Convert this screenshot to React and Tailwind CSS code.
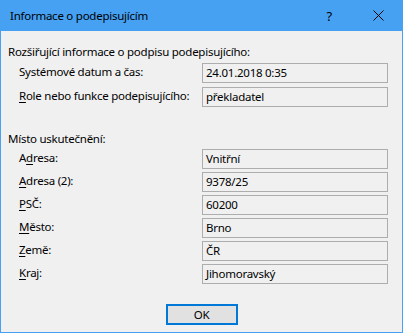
const font = { fontFamily: '"Noto Sans", "Liberation Sans", sans-serif' };

function Key({ children }) {
  return <span className="underline underline-offset-2">{children}</span>;
}

function Row({ label, value }) {
  return (
    <div className="flex h-5 items-center">
      <div className="w-[194px] whitespace-nowrap pl-[11px] pb-[3px]">{label}</div>
      <div className="flex h-5 w-[186px] items-center border border-[#adadad] pl-[3px] pb-[1px]">
        {value}
      </div>
    </div>
  );
}

export default function App() {
  return (
    <div
      className="flex h-[333px] w-[403px] flex-col bg-[#47a1f3] text-[11.5px] leading-4 tracking-[-0.25px] text-black"
      style={font}
    >
      {/* title bar */}
      <div className="flex h-[31px] shrink-0 items-center pl-[10px]">
        <span className="flex-1">Informace o podepisujícím</span>
        <span className="mr-[41px] text-[13px]">?</span>
        <svg width="11" height="11" viewBox="0 0 11 11" className="mr-[19px]">
          <path d="M0.5 0.5 L10.5 10.5 M10.5 0.5 L0.5 10.5" stroke="#000" strokeWidth="1" />
        </svg>
      </div>

      {/* client area */}
      <div className="mx-px mb-px flex flex-1 flex-col bg-[#f0f0f0] pl-[7px] pt-[13px]">
        <div>Rozšiřující informace o podpisu podepisujícího:</div>
        <div className="mt-[3px] flex flex-col gap-1">
          <Row label="Systémové datum a čas:" value="24.01.2018 0:35" />
          <Row
            label={
              <>
                <Key>R</Key>ole nebo funkce podepisujícího:
              </>
            }
            value="překladatel"
          />
        </div>

        <div className="mt-[24px]">Místo uskutečnění:</div>
        <div className="mt-[2px] flex flex-col gap-[3px]">
          <Row
            label={
              <>
                A<Key>d</Key>resa:
              </>
            }
            value="Vnitřní"
          />
          <Row
            label={
              <>
                <Key>A</Key>dresa (2):
              </>
            }
            value="9378/25"
          />
          <Row
            label={
              <>
                <Key>P</Key>SČ:
              </>
            }
            value="60200"
          />
          <Row
            label={
              <>
                <Key>M</Key>ěsto:
              </>
            }
            value="Brno"
          />
          <Row
            label={
              <>
                <Key>Z</Key>emě:
              </>
            }
            value="ČR"
          />
          <Row
            label={
              <>
                <Key>K</Key>raj:
              </>
            }
            value="Jihomoravský"
          />
        </div>

        <div className="mt-[20px] flex justify-center pr-[7px]">
          <button className="flex h-[21px] w-[72px] items-center justify-center border-2 border-[#0078d7] bg-[#e1e1e1]">
            OK
          </button>
        </div>
      </div>
    </div>
  );
}
